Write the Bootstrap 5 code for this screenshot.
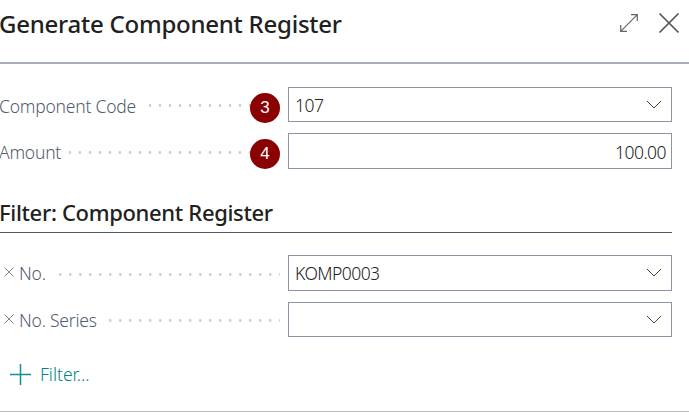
<!DOCTYPE html>
<html lang="en">
<head>
<meta charset="utf-8">
<meta name="viewport" content="width=device-width, initial-scale=1">
<title>Generate Component Register</title>
<link href="https://cdn.jsdelivr.net/npm/bootstrap@5.3.0/dist/css/bootstrap.min.css" rel="stylesheet">
<style>
body{font-family:"Noto Sans","Open Sans",sans-serif;background:#fff;color:#212121;overflow:hidden;font-size:17.5px}
.dialog-head{height:64px;border-bottom:2px solid #a6acb8;padding:0 9px 17px 0}
.dialog-title{font-size:24px;font-weight:460;letter-spacing:-.24px;line-height:48px;margin-left:-1px;padding-top:2px}
.expand-icon{margin-right:20px}
.form-area{width:672px;padding-top:23px}
.field-row{height:36px}
.field-row.short{height:35px}
.caption-cell{width:288px;color:#505c6d;position:relative;font-weight:340}
.caption-cell span{line-height:36px;letter-spacing:-.22px;margin-left:-1px;padding-top:2px}
.filter-row .caption-cell span{padding-top:0}
.filter-row .remove-icon{margin-bottom:2px}
.leader{height:3px;margin:2px 8px 0 12px;background:radial-gradient(circle at 5px 1.5px,#cdcdcd 1.1px,transparent 1.6px) right -5px top 0/10px 3px repeat-x}
.field-box{border:1px solid #8a94a3;border-radius:0;padding:0 6px;color:#212121;font-weight:340;letter-spacing:-.55px}
.field-box span{padding-top:1px}
.field-box.amount{padding-right:5px}
.field-box.amount span{padding-top:2px}
.field-box svg{margin-right:3px}
.marker{position:absolute;left:250px;top:6px;width:30px;height:30px;border-radius:50%;background:#8b0000;color:#fff;font:17px/29px "Liberation Sans",sans-serif;text-align:center}
.section-title{font-size:22px;font-weight:460;letter-spacing:-.33px;line-height:28px;height:35px;margin:29px 0 22px -1px;border-bottom:1px solid #505c6d}
.remove-icon{width:12px;height:12px;margin:0 5px 0 3px}
.add-filter{color:#008489;margin-top:19px;height:36px;padding-left:10px;font-weight:340;letter-spacing:0}
.add-filter span{margin-left:9px;padding-top:1px}
.bottom-rule{height:1px;background:#b9b9b9;margin-top:19px}
svg{display:block;flex:none;fill:none}
</style>
</head>
<body>
<header class="dialog-head d-flex align-items-center">
  <h1 class="dialog-title mb-0 me-auto text-nowrap">Generate Component Register</h1>
  <svg class="expand-icon" width="18" height="18" viewBox="0 0 18 18" stroke="#666" stroke-width="1.200"><path d="M.7 17.300L17.300.7M11 .7h6.300V7M.7 11v6.300H7"/></svg>
  <svg width="22" height="22" viewBox="0 0 22 22" stroke="#555" stroke-width="1.700"><path d="M1.500 1.500l19 19M20.500 1.500l-19 19"/></svg>
</header>
<main>
  <div class="form-area">
    <div class="field-row short d-flex">
      <div class="caption-cell d-flex align-items-center"><span class="text-nowrap">Component Code</span><div class="leader flex-grow-1"></div><b class="marker">3</b></div>
      <div class="field-box flex-grow-1 d-flex align-items-center justify-content-between"><span>107</span>
        <svg width="16" height="10" viewBox="0 0 16 10" stroke="#444"><path d="M1 1l7 7 7-7"/></svg></div>
    </div>
    <div class="field-row d-flex" style="margin-top:11px">
      <div class="caption-cell d-flex align-items-center"><span class="text-nowrap">Amount</span><div class="leader flex-grow-1 ms-2"></div><b class="marker">4</b></div>
      <div class="field-box amount flex-grow-1 d-flex align-items-center justify-content-end"><span>100.00</span></div>
    </div>
    <h2 class="section-title">Filter: Component Register</h2>
    <div class="field-row filter-row d-flex">
      <div class="caption-cell d-flex align-items-center"><svg class="remove-icon" viewBox="0 0 12 12" stroke="#7b8594"><path d="M1.500 1.500l9 9M10.500 1.500l-9 9"/></svg><span class="text-nowrap">No.</span><div class="leader flex-grow-1"></div></div>
      <div class="field-box flex-grow-1 d-flex align-items-center justify-content-between"><span>KOMP0003</span>
        <svg width="16" height="10" viewBox="0 0 16 10" stroke="#444"><path d="M1 1l7 7 7-7"/></svg></div>
    </div>
    <div class="field-row filter-row short d-flex" style="margin-top:11px">
      <div class="caption-cell d-flex align-items-center"><svg class="remove-icon" viewBox="0 0 12 12" stroke="#7b8594"><path d="M1.500 1.500l9 9M10.500 1.500l-9 9"/></svg><span class="text-nowrap">No. Series</span><div class="leader flex-grow-1"></div></div>
      <div class="field-box flex-grow-1 d-flex align-items-center justify-content-end">
        <svg width="16" height="10" viewBox="0 0 16 10" stroke="#444"><path d="M1 1l7 7 7-7"/></svg></div>
    </div>
    <div class="add-filter d-flex align-items-center"><svg width="21" height="21" viewBox="0 0 21 21" stroke="#158f94" stroke-width="1.500"><path d="M10.500 0v21M0 10.500h21"/></svg><span>Filter...</span></div>
  </div>
  <div class="bottom-rule"></div>
</main>
<script src="https://cdn.jsdelivr.net/npm/bootstrap@5.3.0/dist/js/bootstrap.bundle.min.js"></script>
</body>
</html>
